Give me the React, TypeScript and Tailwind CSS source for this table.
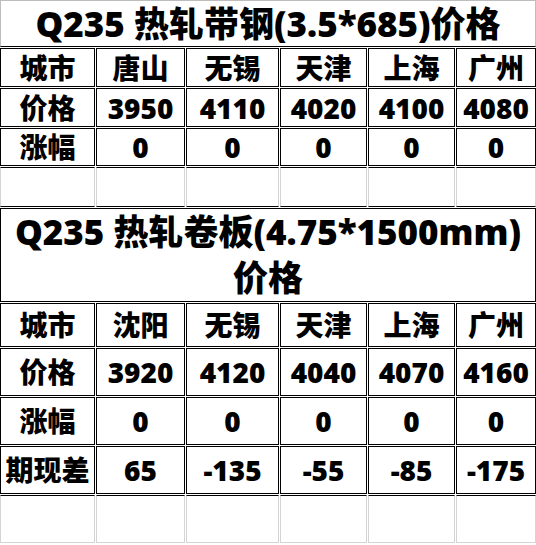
const cols = "grid grid-cols-[95px_89px_93px_87px_87px_80px] gap-px";

type Row = { cells: string[]; h: string };

const table1: Row[] = [
  { cells: ["城市", "唐山", "无锡", "天津", "上海", "广州"], h: "h-[39px]" },
  { cells: ["价格", "3950", "4110", "4020", "4100", "4080"], h: "h-[39px]" },
  { cells: ["涨幅", "0", "0", "0", "0", "0"], h: "h-[38px]" },
];

const table2: Row[] = [
  { cells: ["城市", "沈阳", "无锡", "天津", "上海", "广州"], h: "h-[44px]" },
  { cells: ["价格", "3920", "4120", "4040", "4070", "4160"], h: "h-[48px]" },
  { cells: ["涨幅", "0", "0", "0", "0", "0"], h: "h-[48px]" },
  { cells: ["期现差", "65", "-135", "-55", "-85", "-175"], h: "h-[48px]" },
];

function DataRows({ rows }: { rows: Row[] }) {
  return (
    <>
      {rows.map((r, i) => (
        <div key={i} className={`${cols} ${r.h}`}>
          {r.cells.map((c, j) => (
            <div
              key={j}
              className="flex items-center justify-center border border-black text-[28px] font-extrabold leading-none whitespace-nowrap"
            >
              {c}
            </div>
          ))}
        </div>
      ))}
    </>
  );
}

function BlankRow({ h, top }: { h: string; top: string }) {
  return (
    <div className={`${cols} ${h}`}>
      {Array.from({ length: 6 }).map((_, j) => (
        <div key={j} className={`border border-[#d4d4d4] ${top}`} />
      ))}
    </div>
  );
}

export default function App() {
  return (
    <div
      className="flex w-[536px] h-[545px] flex-col gap-px overflow-hidden bg-white text-black"
      style={{ fontFamily: '"Open Sans", "Noto Sans CJK SC", sans-serif' }}
    >
      <div className="flex h-[47px] items-center justify-center border border-[#bdbdbd] border-b-black text-[35px] font-extrabold leading-none whitespace-nowrap">
        Q235 热轧带钢(3.5*685)价格
      </div>
      <DataRows rows={table1} />
      <BlankRow h="h-[40px]" top="border-t-black border-b-black" />
      <div className="flex h-[94px] flex-col items-center justify-center border border-black text-[35px] font-extrabold leading-[46px] text-center">
        <span className="whitespace-nowrap">Q235 热轧卷板(4.75*1500mm)</span>
        <span>价格</span>
      </div>
      <DataRows rows={table2} />
      <BlankRow h="h-[48px]" top="border-t-black" />
    </div>
  );
}
